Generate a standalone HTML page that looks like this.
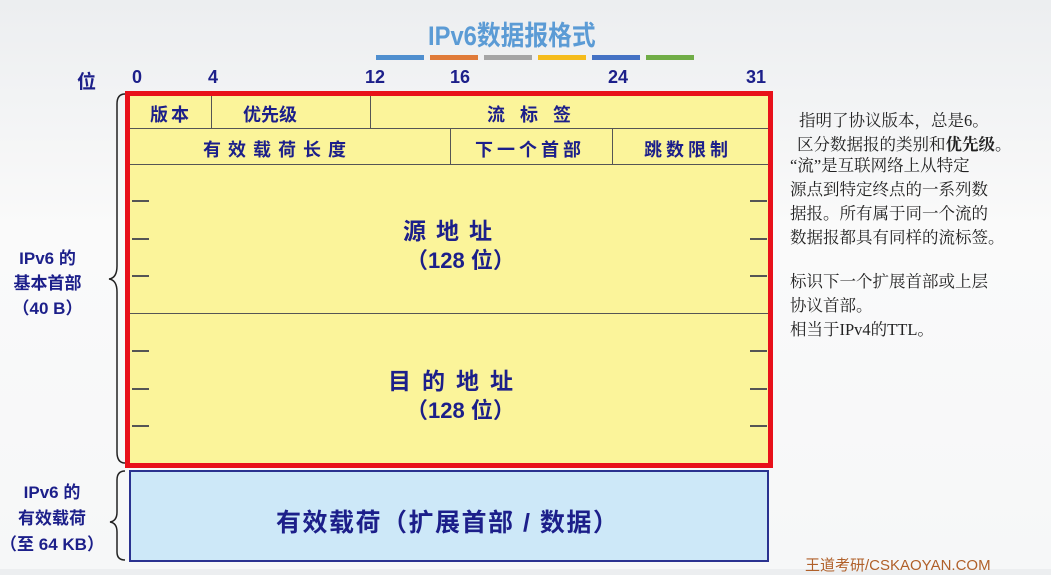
<!DOCTYPE html><html><head><meta charset="utf-8"><style>
body{margin:0;width:1051px;height:569px;overflow:hidden;background:linear-gradient(#eceef0,#fafafa 40%,#f6f7f8);font-family:"Liberation Sans","Noto Sans CJK SC",sans-serif;position:relative}
.a{position:absolute;white-space:nowrap}
.b{color:#1c1f8a;font-weight:bold}
.t{color:#222;font-size:16.5px;font-family:"Liberation Serif","Noto Serif CJK SC",serif}
.tick{position:absolute;height:2px;width:17px;background:#555}
.vl{position:absolute;width:1px;background:#555}
.hl{position:absolute;height:1px;background:#555}
</style></head><body>
<div class="a" style="left:428px;top:14px;font-size:27px;font-weight:bold;color:#5b9bd5;transform:scaleX(.88);transform-origin:left">IPv6数据报格式</div>
<div class="a" style="left:376px;top:55px;width:48px;height:5px;background:#4f8fcf"></div>
<div class="a" style="left:430px;top:55px;width:48px;height:5px;background:#e07b39"></div>
<div class="a" style="left:484px;top:55px;width:48px;height:5px;background:#a5a5a5"></div>
<div class="a" style="left:538px;top:55px;width:48px;height:5px;background:#f5bc1c"></div>
<div class="a" style="left:592px;top:55px;width:48px;height:5px;background:#4472c4"></div>
<div class="a" style="left:646px;top:55px;width:48px;height:5px;background:#70ad47"></div>
<div class="a b" style="left:77px;top:67px;font-size:19px">位</div>
<div class="a b" style="left:132px;top:67px;font-size:18px">0</div>
<div class="a b" style="left:208px;top:67px;font-size:18px">4</div>
<div class="a b" style="left:365px;top:67px;font-size:18px">12</div>
<div class="a b" style="left:450px;top:67px;font-size:18px">16</div>
<div class="a b" style="left:608px;top:67px;font-size:18px">24</div>
<div class="a b" style="left:746px;top:67px;font-size:18px">31</div>
<div class="a" style="left:125px;top:91px;width:638px;height:367px;border:5px solid #e8101a;background:#fbf49a"></div>
<div class="hl" style="left:130px;top:128px;width:638px"></div>
<div class="hl" style="left:130px;top:164px;width:638px"></div>
<div class="hl" style="left:130px;top:313px;width:638px"></div>
<div class="vl" style="left:211px;top:96px;height:32px"></div>
<div class="vl" style="left:370px;top:96px;height:32px"></div>
<div class="vl" style="left:450px;top:128px;height:36px"></div>
<div class="vl" style="left:612px;top:128px;height:36px"></div>
<div class="a b" style="left:150px;top:101px;font-size:18px;letter-spacing:3px">版本</div>
<div class="a b" style="left:243px;top:101px;font-size:18px">优先级</div>
<div class="a b" style="left:487px;top:101px;font-size:18px;letter-spacing:15px">流标签</div>
<div class="a b" style="left:203px;top:136px;font-size:18px;letter-spacing:7px">有效载荷长度</div>
<div class="a b" style="left:475px;top:136px;font-size:18px;letter-spacing:4px">下一个首部</div>
<div class="a b" style="left:644px;top:136px;font-size:18px;letter-spacing:4px">跳数限制</div>
<div class="a b" style="left:403px;top:212px;font-size:23px;letter-spacing:10px">源地址</div>
<div class="a b" style="left:406px;top:243px;font-size:22px">（128 位）</div>
<div class="a b" style="left:388px;top:362px;font-size:23px;letter-spacing:11px">目的地址</div>
<div class="a b" style="left:406px;top:393px;font-size:22px">（128 位）</div>
<div class="tick" style="left:132px;top:200px"></div><div class="tick" style="left:132px;top:238px"></div><div class="tick" style="left:132px;top:275px"></div>
<div class="tick" style="left:132px;top:350px"></div><div class="tick" style="left:132px;top:388px"></div><div class="tick" style="left:132px;top:425px"></div>
<div class="tick" style="left:750px;top:200px"></div><div class="tick" style="left:750px;top:238px"></div><div class="tick" style="left:750px;top:275px"></div>
<div class="tick" style="left:750px;top:350px"></div><div class="tick" style="left:750px;top:388px"></div><div class="tick" style="left:750px;top:425px"></div>
<div class="a" style="left:129px;top:470px;width:636px;height:88px;border:2px solid #2a3290;background:#cde8f8"></div>
<div class="a b" style="left:276px;top:503px;font-size:25px;letter-spacing:1.5px">有效载荷（扩展首部 / 数据）</div>
<svg class="a" style="left:100px;top:90px" width="30" height="475"><g fill="none" stroke="#222" stroke-width="1.5">
<path d="M25 4 Q17 4 17 14 L17 176 Q17 188 9 189 Q17 190 17 202 L17 362 Q17 373 25 373"/>
<path d="M25 381 Q17 381 17 390 L17 422 Q17 431 10 432 Q17 433 17 442 L17 462 Q17 470 25 470"/></g></svg>
<div class="a b" style="left:0;width:95px;top:246px;text-align:center;font-size:17px;line-height:25px">IPv6 的<br>基本首部<br>（40 B）</div>
<div class="a b" style="left:0;width:104px;top:480px;text-align:center;font-size:17px;line-height:26px">IPv6 的<br>有效载荷<br>（至 64 KB）</div>
<div class="a t" style="left:799px;top:107px">指明了协议版本，总是6。</div>
<div class="a t" style="left:797px;top:131px">区分数据报的类别和<b>优先级</b>。</div>
<div class="a t" style="left:790px;top:154px;line-height:24px">“流”是互联网络上从特定<br>源点到特定终点的一系列数<br>据报。所有属于同一个流的<br>数据报都具有同样的流标签。</div>
<div class="a t" style="left:790px;top:270px;line-height:24px">标识下一个扩展首部或上层<br>协议首部。<br>相当于IPv4的TTL。</div>
<div class="a" style="left:805px;top:554px;font-size:15px;color:#b0602a">王道考研/CSKAOYAN.COM</div>
</body></html>
